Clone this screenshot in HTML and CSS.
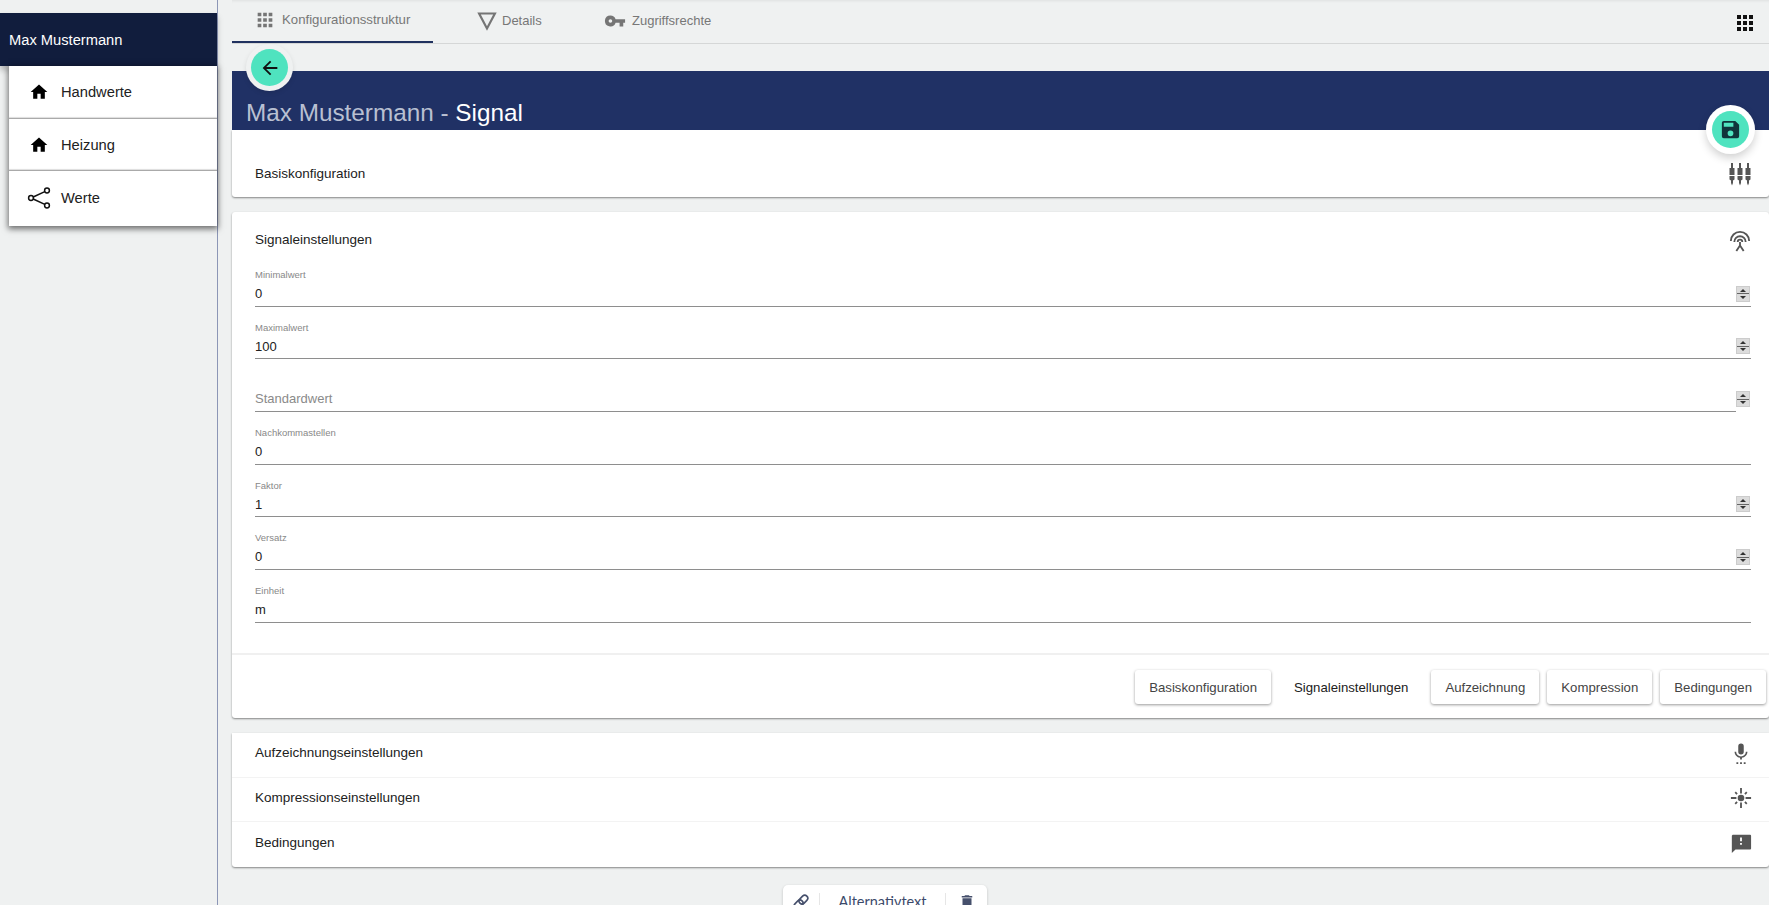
FILE: index.html
```html
<!DOCTYPE html>
<html lang="de">
<head>
<meta charset="utf-8">
<title>Signal</title>
<link rel="stylesheet" href="styles.css">
</head>
<body>
<aside class="sidebar">
  <div class="side-head">Max Mustermann</div>
  <nav class="side-menu">
    <a class="side-item"><svg class="side-icon" viewBox="0 0 24 24"><path d="M10 20v-6h4v6h5v-8h3L12 3 2 12h3v8z"/></svg>Handwerte</a>
    <a class="side-item"><svg class="side-icon" viewBox="0 0 24 24"><path d="M10 20v-6h4v6h5v-8h3L12 3 2 12h3v8z"/></svg>Heizung</a>
    <a class="side-item"><svg class="side-icon share" viewBox="0 0 24 24"><g fill="none" stroke="#111" stroke-width="1.5"><circle cx="4" cy="12" r="2.400"/><circle cx="20" cy="4.500" r="2.400"/><circle cx="20" cy="19.500" r="2.400"/><path d="M6.200 11 17.800 5.600M6.200 13 17.800 18.400"/></g></svg>Werte</a>
  </nav>
</aside>
<main class="main">
  <div class="tabs">
    <a class="tab active"><svg class="tab-icon" viewBox="0 0 24 24"><path d="M4 8h4V4H4zm6 12h4v-4h-4zm-6 0h4v-4H4zm0-6h4v-4H4zm6 0h4v-4h-4zm6-10v4h4V4zm-6 4h4V4h-4zm6 6h4v-4h-4zm0 6h4v-4h-4z"/></svg>Konfigurationsstruktur</a>
    <a class="tab details"><svg class="tab-icon tri" viewBox="0 0 24 24"><path d="M12 21 2.500 3h19z" fill="none" stroke="#757575" stroke-width="2.600"/></svg>Details</a>
    <a class="tab"><svg class="tab-icon" viewBox="0 0 24 24"><path d="M12.650 10A6 6 0 0 0 7 6a6 6 0 1 0 5.650 8H17v4h4v-4h2v-4zM7 14a2 2 0 1 1 0-4 2 2 0 0 1 0 4z"/></svg>Zugriffsrechte</a>
    <svg class="apps" viewBox="0 0 24 24"><path d="M4 8h4V4H4zm6 12h4v-4h-4zm-6 0h4v-4H4zm0-6h4v-4H4zm6 0h4v-4h-4zm6-10v4h4V4zm-6 4h4V4h-4zm6 6h4v-4h-4zm0 6h4v-4h-4z"/></svg>
  </div>
  <div class="band">
    <span class="fab fab-back"><svg viewBox="0 0 24 24"><path d="M20 11H7.830l5.590-5.590L12 4l-8 8 8 8 1.410-1.410L7.830 13H20z"/></svg></span>
    <h1 class="title"><span class="title-dim">Max Mustermann - </span>Signal</h1>
    <span class="fab fab-save"><svg viewBox="0 0 24 24"><path fill="#10343b" d="M17 3H5a2 2 0 0 0-2 2v14a2 2 0 0 0 2 2h14a2 2 0 0 0 2-2V7zm-5 16a3 3 0 1 1 0-6 3 3 0 0 1 0 6zm3-10H5V5h10z"/></svg></span>
  </div>

  <section class="card card-base">
    <div class="panel-head"><span>Basiskonfiguration</span>
      <svg class="panel-icon mixer" viewBox="0 0 24 24"><path d="M3 1h2v5h1.500v7h-5V6H3zM1.500 14h5v3.500l-1.500 1V21l-1 2.500L3 21v-2.500l-1.500-1z"/><path transform="translate(8)" d="M3 1h2v5h1.500v7h-5V6H3zM1.500 14h5v3.500l-1.500 1V21l-1 2.500L3 21v-2.500l-1.500-1z"/><path transform="translate(16)" d="M3 1h2v5h1.500v7h-5V6H3zM1.500 14h5v3.500l-1.500 1V21l-1 2.500L3 21v-2.500l-1.500-1z"/></svg>
    </div>
  </section>

  <section class="card card-signal">
    <div class="panel-head signal-head"><span>Signaleinstellungen</span>
      <svg class="panel-icon antenna" viewBox="0 0 24 24"><g fill="none" stroke="#555" stroke-width="2"><path d="M2 12a10 10 0 0 1 20 0"/><path d="M5.800 13a6.200 6.200 0 0 1 12.400 0"/><path d="M9.500 13a2.500 2.500 0 0 1 5 0"/><path d="M12 13v5M12 17l-4 6M12 17l4 6"/></g></svg>
    </div>
    <div class="fields">
      <div class="field"><label class="field-label">Minimalwert</label><div class="field-value">0</div><span class="spin"></span></div>
      <div class="field"><label class="field-label">Maximalwert</label><div class="field-value">100</div><span class="spin"></span></div>
      <div class="field field-empty"><label class="field-label"></label><div class="field-value placeholder">Standardwert</div><span class="spin"></span></div>
      <div class="field"><label class="field-label">Nachkommastellen</label><div class="field-value">0</div></div>
      <div class="field"><label class="field-label">Faktor</label><div class="field-value">1</div><span class="spin"></span></div>
      <div class="field"><label class="field-label">Versatz</label><div class="field-value">0</div><span class="spin"></span></div>
      <div class="field"><label class="field-label">Einheit</label><div class="field-value">m</div></div>
    </div>
    <div class="actions">
      <button class="btn">Basiskonfiguration</button>
      <button class="btn btn-flat">Signaleinstellungen</button>
      <button class="btn">Aufzeichnung</button>
      <button class="btn">Kompression</button>
      <button class="btn">Bedingungen</button>
    </div>
  </section>

  <section class="card card-rest">
    <div class="panel-head row"><span>Aufzeichnungseinstellungen</span>
      <svg class="panel-icon" viewBox="0 0 24 24"><path d="M12 13.500a3 3 0 0 0 3-3v-6a3 3 0 0 0-6 0v6a3 3 0 0 0 3 3zm5.300-3a5.300 5.300 0 0 1-10.600 0H5c0 3.400 2.700 6.200 6 6.700V19h2v-1.800c3.300-.5 6-3.300 6-6.700zM7 22h2v2H7zm4 0h2v2h-2zm4 0h2v2h-2z"/></svg>
    </div>
    <div class="panel-head row"><span>Kompressionseinstellungen</span>
      <svg class="panel-icon" viewBox="0 0 24 24"><circle cx="12" cy="12" r="3.600"/><path d="M11 1h2v6h-2zm0 16h2v6h-2zM1 11h6v2H1zm16 0h6v2h-6zM5 6.400 6.400 5l2 2L7 8.400zM15.600 17l1.400-1.400 2 2L17.600 19zM17.600 5 19 6.400l-2 2L15.600 7zM7 15.600 8.400 17l-2 2L5 17.600z"/></svg>
    </div>
    <div class="panel-head row"><span>Bedingungen</span>
      <svg class="panel-icon" viewBox="0 0 24 24"><path d="M22 3H3.500C2.700 3 2 3.700 2 4.500V23l4-4h16c.6 0 1-.4 1-1V4c0-.6-.4-1-1-1zm-9 11h-2v-2h2v2zm0-4h-2V6h2v4z"/></svg>
    </div>
  </section>

  <div class="floatbar">
    <span class="bar-slot slot-left"><svg class="bar-icon" viewBox="0 0 24 24"><g fill="none" stroke="#46506c" stroke-width="2.200" transform="rotate(-45 12 12)"><rect x="1" y="8" width="13" height="8" rx="4"/><rect x="10" y="8" width="13" height="8" rx="4"/></g></svg></span>
    <span class="bar-text">Alternativtext</span>
    <span class="bar-slot slot-right"><svg class="bar-icon" viewBox="0 0 24 24"><path d="M6 19a2 2 0 0 0 2 2h8a2 2 0 0 0 2-2V7H6zM19 4h-3.500l-1-1h-5l-1 1H5v2h14z"/></svg></span>
  </div>
</main>
</body>
</html>
```

FILE: styles.css
```css
* { box-sizing: border-box; }
html, body { margin: 0; height: 905px; overflow: hidden; }
body {
  display: flex;
  background: #eff1f1;
  font-family: "Liberation Sans", Arial, sans-serif;
  font-size: 14px;
  color: #212121;
}
.sidebar {
  width: 218px;
  flex: none;
  padding-top: 13px;
  border-right: 1px solid #8c96b6;
}
.side-head {
  height: 53px;
  padding: 18px 9px 0;
  background: #111d3d;
  color: #fff;
  font-size: 14.700px;
  box-shadow: 0 4px 6px rgba(0, 0, 0, .25);
  line-height: 18px;
}
.side-menu {
  position: relative;
  margin-left: 9px;
  background: #fff;
  box-shadow: 0 2px 6px 1px rgba(0, 0, 0, .55);
}
.side-item {
  display: flex;
  align-items: center;
  height: 52.500px;
  padding: 1px 0 0 20px;
  border-bottom: 1px solid #aaa;
  box-shadow: inset 0 -1px 1px #ddd;
  color: #212121;
  font-size: 14.700px;
  gap: 12px;
}
.side-item:last-child { border-bottom: 0; box-shadow: none; height: 55px; padding: 0 0 2px 20px; }
.side-icon { width: 20px; height: 20px; fill: #000; }
.side-icon.share { width: 24px; height: 24px; margin: 0 -2px; }
.main { flex: 1; min-width: 0; height: 905px; overflow: hidden; padding-left: 14px; position: relative; }
.tabs {
  display: flex;
  height: 44px;
  border-bottom: 1px solid #d5d7d7;
  position: relative;
  box-shadow: inset 0 3px 3px -2px rgba(0,0,0,.07);
}
.tab {
  display: flex;
  align-items: center;
  gap: 6px;
  height: 43px;
  padding-bottom: 2px;
  color: #777;
  font-size: 13px;
}
.tab.active { border-bottom: 2px solid #20315f; width: 201px; padding-left: 22px; font-size: 13.200px; }
.tab.details { padding-left: 44px; width: 171px; gap: 5px; }
.tab-icon { width: 22px; height: 22px; fill: #757575; flex: none; }
.tab-icon.tri { width: 20px; height: 20px; }
.apps { position: absolute; right: 12px; top: 11px; width: 24px; height: 24px; fill: #111; }
.band {
  position: relative;
  height: 59px;
  margin-top: 27px;
  background: #203165;
  color: #fff;
}
.title {
  position: absolute;
  left: 14px;
  bottom: 2px;
  margin: 0;
  font-size: 24.300px;
  font-weight: 400;
  line-height: 30px;
}
.title-dim { color: #b9c0d2; }
.fab {
  position: absolute;
  display: flex;
  align-items: center;
  justify-content: center;
  border-radius: 50%;
  background: #4fe3bf;
}
.fab-back {
  left: 19px;
  top: -22px;
  width: 37px;
  height: 37px;
  box-shadow: 0 0 0 5px #eff1f1, 0 2px 5px 5px rgba(0,0,0,.1);
}
.fab-back svg { width: 22px; height: 22px; fill: #111; }
.fab-save {
  right: 20px;
  top: 40px;
  width: 37px;
  height: 37px;
  z-index: 2;
  box-shadow: 0 0 0 6px #fff, 0 4px 8px 6px rgba(0,0,0,.18);
}
.fab-save svg { width: 23px; height: 23px; }
.card {
  background: #fff;
  box-shadow: 0 1px 2px rgba(0,0,0,.45);
  border-radius: 0 0 3px 3px;
}
.card-base { height: 67px; padding: 28px 18px 0 23px; }
.panel-head {
  display: flex;
  align-items: center;
  justify-content: space-between;
  height: 30px;
  font-size: 13.500px;
  color: #212121;
}
.panel-icon { width: 22px; height: 22px; fill: #555; flex: none; margin-right: -1px; }
.mixer { width: 24px; height: 24px; margin: 2px -1px 0 0; }
.antenna { margin: 3px 0 0 0; }
.card-signal { margin-top: 15px; height: 506px; border-radius: 3px; position: relative; display: flex; flex-direction: column; }
.signal-head { padding: 18px 18px 0 23px; height: 37px; }
.fields { padding: 5px 18px 0 23px; height: 406px; border-bottom: 2px solid #f0f0f0; flex: none; }
.field {
  position: relative;
  height: 52.700px;
  padding-top: 14px;
  border-bottom: 1px solid #8e8e8e;
}
.field-label {
  display: block;
  height: 13px;
  font-size: 9.500px;
  line-height: 13px;
  color: #888;
}
.field-value {
  height: 25px;
  line-height: 26px;
  font-size: 13px;
  color: #212121;
}
.placeholder { color: #8a8a8a; }
.field-empty { margin-right: 15px; }
.field-empty .spin { right: -14px; }
.spin {
  position: absolute;
  right: 1px;
  bottom: 4px;
  width: 14px;
  height: 16px;
  background:
    linear-gradient(#666, #666) center 6.500px / 100% 1px no-repeat,
    #dcdcdc;
  border: 1px solid #ccc;
}
.spin::before, .spin::after {
  content: "";
  position: absolute;
  left: 3px;
  border-left: 3px solid transparent;
  border-right: 3px solid transparent;
}
.spin::before { top: 2px; border-bottom: 3px solid #333; }
.spin::after { bottom: 2px; border-top: 3px solid #333; }
.actions {
  flex: 1;
  display: flex;
  justify-content: flex-end;
  align-items: center;
  gap: 8px;
  padding: 1px 3px 0 0;
}
.btn {
  height: 34px;
  padding: 0 14px;
  border: 0;
  border-radius: 3px;
  background: #fff;
  font: inherit;
  font-size: 13.200px;
  color: #444;
  box-shadow: 0 1px 3px rgba(0,0,0,.4);
}
.btn-flat { box-shadow: none; color: #212121; padding: 0 15px; }
.card-rest { margin-top: 15px; height: 134px; }
.row { height: 44.700px; padding: 0 18px 4px 23px; border-bottom: 1px solid #f3f3f3; }
.row:last-child { border-bottom: 0; }
.floatbar {
  position: absolute;
  left: 565px;
  top: 885px;
  width: 204px;
  height: 40px;
  display: flex;
  background: #fff;
  border-radius: 5px;
  box-shadow: 0 1px 3px rgba(0,0,0,.2);
  padding-top: 8px;
}
.bar-slot { flex: none; display: flex; justify-content: center; }
.slot-left { width: 36px; }
.slot-right { width: 41px; }
.bar-icon { width: 18px; height: 18px; fill: #46506c; flex: none; }
.bar-text {
  flex: 1;
  text-align: center;
  font-family: Lato, "Liberation Sans", sans-serif;
  font-size: 14.500px;
  color: #3c4a6b;
  border-left: 1px solid #e6e6e6;
  border-right: 1px solid #e6e6e6;
  height: 30px;
  line-height: 18px;
}
```
